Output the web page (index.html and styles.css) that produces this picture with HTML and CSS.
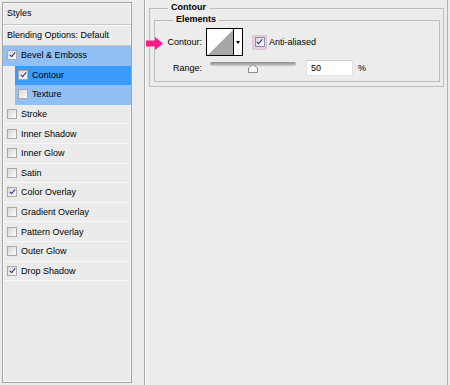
FILE: index.html
```html
<!DOCTYPE html>
<html>
	<head>
		<title>Layer Style - Contour</title>
		<link rel="stylesheet" href="styles.css">
	</head>
	<body>
		<div id="dialog">
			<div class="styles-list">
				<div class="head">Styles</div>
				<div class="head">Blending Options: Default</div>
				<div class="item picked"><span class="cb on"></span>Bevel &amp; Emboss</div>
				<div class="item sub current"><span class="cb on"></span>Contour</div>
				<div class="item sub picked"><span class="cb"></span>Texture</div>
				<div class="item"><span class="cb"></span>Stroke</div>
				<div class="item"><span class="cb"></span>Inner Shadow</div>
				<div class="item"><span class="cb"></span>Inner Glow</div>
				<div class="item"><span class="cb"></span>Satin</div>
				<div class="item"><span class="cb on"></span>Color Overlay</div>
				<div class="item"><span class="cb"></span>Gradient Overlay</div>
				<div class="item"><span class="cb"></span>Pattern Overlay</div>
				<div class="item"><span class="cb"></span>Outer Glow</div>
				<div class="item"><span class="cb on"></span>Drop Shadow</div>
			</div>
			<div class="options">
				<fieldset class="group">
					<legend>Contour</legend>
					<fieldset class="group inner">
						<legend>Elements</legend>
						<div class="row contour-row">
							<svg class="pointer" width="17" height="13" viewBox="0 0 17 13"><polygon points="0,3.5 9,3.5 9,0 17,6.5 9,13 9,9.5 0,9.5" fill="#ff1a8c"/></svg>
							<div class="label">Contour:</div>
							<div class="picker">
								<svg class="curve" width="26" height="26" viewBox="0 0 26 26"><polygon points="1,26 26,1 26,26" fill="#a7a7a7"/></svg>
								<div class="drop"><span class="tri"></span></div>
							</div>
							<div class="aa"><span class="hl"><span class="cb on"></span></span>Anti-aliased</div>
						</div>
						<div class="row">
							<div class="label">Range:</div>
							<div class="slider">
								<div class="track"></div>
								<svg class="thumb" style="left:50%" width="10" height="9" viewBox="0 0 10 9"><polygon points="0.5,4 5,0.5 9.5,4 9.5,8.5 0.5,8.5" fill="#f6f6f6" stroke="#8d8d8d"/></svg>
							</div>
							<div class="num">50</div>
							<div class="unit">%</div>
						</div>
					</fieldset>
				</fieldset>
			</div>
		</div>
	</body>
</html>
```

FILE: styles.css
```css
html,body {margin:0;padding:0;background:#ececec;}
body {font-family:"Liberation Sans",Arial,sans-serif;font-size:9px;color:#000;overflow:hidden;}
#dialog {display:flex;height:385px;}

.styles-list {margin:2px 0 0 2px;width:128px;height:379px;border:1px solid #a4a4a4;box-shadow:inset 0 0 0 1px #f7f7f7;background:#ebebeb;}
.head {height:20.5px;line-height:21px;padding-left:4px;border-bottom:1px solid #c6c6c6;box-shadow:0 1px 0 #fafafa;}
.item {display:flex;align-items:center;gap:4px;height:18.6px;padding-left:4px;border-bottom:1px solid #f8f8f8;}
.item.sub {margin-left:12px;padding-left:3px;}
.item.picked {background:#90c0f4;border-bottom-color:transparent;}
.item.current {background:#3b9bfc;border-bottom-color:transparent;}

.cb {position:relative;display:inline-block;width:8px;height:8px;border:1px solid #a9a9a9;background:linear-gradient(135deg,#d6d6d6,#fdfdfd);flex:none;}
.cb.on::after {content:"";position:absolute;left:2.5px;top:0px;width:2px;height:5px;border:solid #2c2f8c;border-width:0 1.5px 1.5px 0;transform:rotate(40deg);}

.options {margin-left:12px;width:302px;border-left:1px solid #a9a9a9;border-right:1px solid #b0b0b0;box-shadow:inset 1px 0 0 #fbfbfb;}
.group {margin:2px 3px 0 4px;padding:0 3px 4px 4px;border:1px solid #bdbdbd;min-width:0;}
.group legend {margin-left:14px;padding:0 3px 2px 3px;font-weight:bold;line-height:10px;}
.group.inner {margin:0;padding:0 0 5px 0;}
.group.inner legend {margin-left:18px;}

.row {display:flex;align-items:center;}
.contour-row {position:relative;margin-top:2px;height:28px;}
.row .label {width:47px;padding-right:4px;text-align:right;flex:none;}
.pointer {position:absolute;left:-9px;top:9px;}

.picker {display:flex;width:35px;height:26px;border:1px solid #000;background:#fff;}
.curve {display:block;border-right:1px solid #000;}
.drop {flex:1;position:relative;}
.tri {position:absolute;left:2px;top:12px;border-style:solid;border-width:3px 2.5px 0 2.5px;border-color:#000 transparent transparent transparent;}

.aa {display:flex;align-items:center;gap:2px;margin-left:9px;}
.hl {display:flex;align-items:center;justify-content:center;width:15px;height:15px;border-radius:2px;background:#e6cfe0;box-shadow:inset 0 0 0 1px #dcc0d4;}
.hl .cb {border-color:#8f8fa8;}

.row + .row {margin-top:4px;height:16px;}
.slider {position:relative;width:86px;height:10px;margin-left:4px;}
.track {position:absolute;left:0;right:0;top:-1px;height:4px;border-radius:2px;background:linear-gradient(#8d8d8d,#cdcdcd);}
.thumb {position:absolute;top:1px;margin-left:-5px;}
.num {width:41px;height:14px;line-height:14px;margin-left:10px;padding-left:4px;background:#fff;border:1px solid #e2e2e2;border-top-color:#cfcfcf;}
.unit {margin-left:5px;}
```
